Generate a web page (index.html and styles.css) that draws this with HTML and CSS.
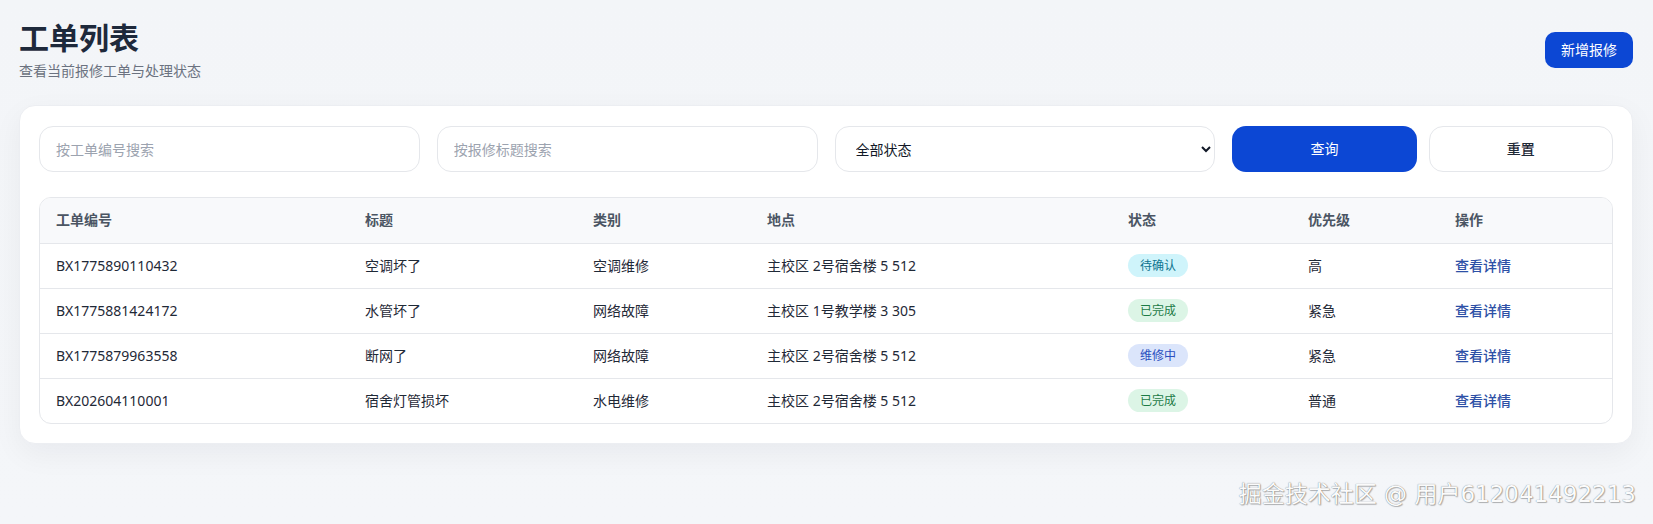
FILE: index.html
```html
<!DOCTYPE html>
<html lang="zh-CN">
<head>
<meta charset="utf-8">
<title>工单列表</title>
<link rel="stylesheet" href="styles.css">
</head>
<body>
<div class="page">
  <header class="page-head">
    <div class="head-text">
      <h1 class="title">工单列表</h1>
      <p class="subtitle">查看当前报修工单与处理状态</p>
    </div>
    <button class="btn btn-primary btn-new">新增报修</button>
  </header>

  <section class="card">
    <div class="filters">
      <input class="field" type="text" placeholder="按工单编号搜索">
      <input class="field" type="text" placeholder="按报修标题搜索">
      <select class="field select">
        <option>全部状态</option>
        <option>待确认</option>
        <option>维修中</option>
        <option>已完成</option>
      </select>
      <div class="actions">
        <button class="btn btn-primary btn-query">查询</button>
        <button class="btn btn-plain">重置</button>
      </div>
    </div>

    <div class="table-wrap">
      <table class="table">
        <colgroup>
          <col class="c1"><col class="c2"><col class="c3"><col class="c4"><col class="c5"><col class="c6"><col class="c7">
        </colgroup>
        <thead>
          <tr>
            <th>工单编号</th><th>标题</th><th>类别</th><th>地点</th><th>状态</th><th>优先级</th><th>操作</th>
          </tr>
        </thead>
        <tbody>
          <tr>
            <td>BX1775890110432</td><td>空调坏了</td><td>空调维修</td><td>主校区 2号宿舍楼 5 512</td>
            <td><span class="badge badge-wait">待确认</span></td><td>高</td><td><a class="link" href="#">查看详情</a></td>
          </tr>
          <tr>
            <td>BX1775881424172</td><td>水管坏了</td><td>网络故障</td><td>主校区 1号教学楼 3 305</td>
            <td><span class="badge badge-done">已完成</span></td><td>紧急</td><td><a class="link" href="#">查看详情</a></td>
          </tr>
          <tr>
            <td>BX1775879963558</td><td>断网了</td><td>网络故障</td><td>主校区 2号宿舍楼 5 512</td>
            <td><span class="badge badge-fix">维修中</span></td><td>紧急</td><td><a class="link" href="#">查看详情</a></td>
          </tr>
          <tr>
            <td>BX202604110001</td><td>宿舍灯管损坏</td><td>水电维修</td><td>主校区 2号宿舍楼 5 512</td>
            <td><span class="badge badge-done">已完成</span></td><td>普通</td><td><a class="link" href="#">查看详情</a></td>
          </tr>
        </tbody>
      </table>
    </div>
  </section>
</div>
<div class="watermark">掘金技术社区 @ 用户612041492213</div>
</body>
</html>
```

FILE: styles.css
```css
* { box-sizing: border-box; }

html, body {
  margin: 0;
  height: 100%;
}

body {
  font-family: "Noto Sans", "Noto Sans CJK SC", sans-serif;
  font-size: 14px;
  color: #1f2937;
  background: linear-gradient(180deg, #f3f5f8 0%, #f4f6f9 100%);
  position: relative;
  overflow: hidden;
}

.page {
  padding: 20px 20px 0 19px;
}

.page-head {
  display: flex;
  align-items: center;
  justify-content: space-between;
  margin-bottom: 25px;
}

.title {
  margin: 0;
  font-size: 30px;
  line-height: 36px;
  font-weight: 700;
  color: #1e293b;
}

.subtitle {
  margin: 6px 0 0;
  font-size: 14px;
  line-height: 18px;
  color: #6b7280;
}

.btn {
  font-family: inherit;
  font-size: 14px;
  line-height: 20px;
  border: 1px solid transparent;
  cursor: pointer;
}

.btn-primary {
  background: #0c47d4;
  color: #ffffff;
}

.btn-new {
  padding: 7px 15px;
  border-radius: 10px;
}

.card {
  background: #ffffff;
  border: 1px solid #eceef2;
  border-radius: 16px;
  padding: 20px 19px 19px;
  box-shadow: 0 10px 30px rgba(15, 23, 42, 0.05);
}

.filters {
  display: grid;
  grid-template-columns: repeat(4, 1fr);
  gap: 17px;
  margin-bottom: 25px;
}

.field {
  height: 46px;
  width: 100%;
  border: 1px solid #e5e7eb;
  border-radius: 14px;
  background: #ffffff;
  padding: 0 16px;
  font-family: inherit;
  font-size: 14px;
  color: #111827;
  outline: none;
}

.field::placeholder {
  color: #9ca3af;
}

.select {
  padding: 0 6px 0 16px;
}

.actions {
  display: grid;
  grid-template-columns: 1fr 1fr;
  gap: 12px;
}

.btn-query {
  height: 46px;
  border-radius: 14px;
}

.btn-plain {
  height: 46px;
  border-radius: 14px;
  background: #ffffff;
  border-color: #e5e7eb;
  color: #1f2937;
  font-weight: 500;
}

.table-wrap {
  border: 1px solid #e5e7eb;
  border-radius: 12px;
  overflow: hidden;
}

.table {
  width: 100%;
  border-collapse: collapse;
  table-layout: fixed;
}

.c1 { width: 309px; }
.c2 { width: 228px; }
.c3 { width: 174px; }
.c4 { width: 361px; }
.c5 { width: 180px; }
.c6 { width: 147px; }
.c7 { width: 173px; }

.table th,
.table td {
  height: 45px;
  padding: 0 16px;
  line-height: 20px;
  text-align: left;
  vertical-align: middle;
  border-bottom: 1px solid #e5e7eb;
  white-space: nowrap;
}

.table th {
  background: #f8f9fb;
  color: #4b5563;
  font-weight: 600;
}

.table td {
  color: #1f2937;
}

.table tbody tr:last-child td {
  border-bottom: none;
}

.badge {
  display: inline-block;
  vertical-align: middle;
  padding: 2px 12px;
  line-height: 19px;
  font-size: 12px;
  border-radius: 999px;
}

.badge-wait { background: #cff4fb; color: #0e7490; }
.badge-done { background: #dcf5e6; color: #1d7a46; }
.badge-fix  { background: #dbe5fb; color: #2a4fbf; }

.link {
  color: #2d50a6;
  font-weight: 500;
  text-decoration: none;
}

.watermark {
  position: absolute;
  right: 17px;
  bottom: 16px;
  font-family: "DejaVu Sans", "Noto Sans CJK SC", sans-serif;
  font-size: 23px;
  line-height: 28px;
  color: #fbfbfb;
  text-shadow: 0 0 1px rgba(0, 0, 0, 0.55), 1px 1px 1px rgba(0, 0, 0, 0.25);
  white-space: nowrap;
}
```
